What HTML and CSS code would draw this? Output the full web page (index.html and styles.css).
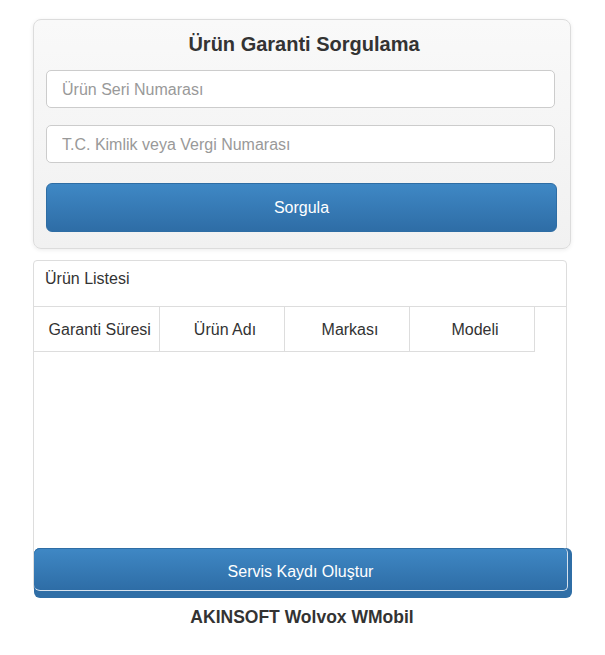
FILE: index.html
```html
<!DOCTYPE html>
<html lang="tr">
<head>
    <meta charset="UTF-8">
    <meta name="viewport" content="width=device-width, initial-scale=1.0">
    <title>Ürün Garanti Sorgulama</title>
    <link rel="stylesheet" href="styles.css">
</head>
<body>
    <div class="page">
        <!-- Sorgulama formu -->
        <div class="well">
            <h2>Ürün Garanti Sorgulama</h2>
            <form id="queryForm">
                <input type="text" class="field" placeholder="Ürün Seri Numarası">
                <input type="text" class="field" placeholder="T.C. Kimlik veya Vergi Numarası">
                <button type="submit" class="btn-blue query-btn">Sorgula</button>
            </form>
        </div>

        <!-- Ürün listesi -->
        <div class="panel">
            <div class="panel-heading">Ürün Listesi</div>
            <table class="product-table">
                <thead>
                    <tr>
                        <th>Garanti Süresi</th>
                        <th>Ürün Adı</th>
                        <th>Markası</th>
                        <th>Modeli</th>
                    </tr>
                </thead>
                <tbody></tbody>
            </table>
        </div>

        <div class="service-wrap">
            <button type="button" class="btn-blue service-btn">Servis Kaydı Oluştur</button>
        </div>

        <p class="footer">AKINSOFT Wolvox WMobil</p>
    </div>
</body>
</html>
```

FILE: styles.css
```css
* {
    margin: 0;
    padding: 0;
    box-sizing: border-box;
}

body {
    font-family: "Liberation Sans", Arial, sans-serif;
    color: #333;
    background-color: #fff;
}

.page {
    width: 538px;
    margin: 19px 0 0 33px;
}

/* Ust kart */
.well {
    width: 538px;
    padding: 12px 13px 16px 12px;
    background: linear-gradient(to bottom, #f9f9f9 0, #f1f1f1 100%);
    border: 1px solid #dcdcdc;
    border-radius: 8px;
    box-shadow: 0 1px 4px rgba(0, 0, 0, 0.08);
}

.well h2 {
    font-size: 20px;
    font-weight: bold;
    text-align: center;
    line-height: 25px;
    padding-left: 5px;
    margin-bottom: 13px;
}

.field {
    display: block;
    width: 509px;
    height: 38px;
    padding: 7px 15px 5px;
    font-family: inherit;
    font-size: 16px;
    color: #555;
    background: #fff;
    border: 1px solid #ccc;
    border-radius: 5px;
    margin-bottom: 17px;
}

.field::placeholder {
    color: #999;
}

.field + .field {
    margin-bottom: 20px;
}

.btn-blue {
    font-family: inherit;
    font-size: 16px;
    color: #fff;
    background: linear-gradient(to bottom, #3f88c5 0, #2e6da6 100%);
    border: 1px solid #2e6da4;
    cursor: pointer;
}

.query-btn {
    display: block;
    width: 511px;
    height: 49px;
    border-radius: 6px;
}

/* Liste paneli */
.panel {
    width: 534px;
    height: 331px;
    margin-top: 11px;
    border: 1px solid #ddd;
    border-radius: 4px;
    background: #fff;
}

.panel-heading {
    height: 46px;
    padding: 9px 11px;
    font-size: 16px;
    line-height: 18px;
    border-bottom: 1px solid #ddd;
}

.product-table {
    border-collapse: collapse;
}

.product-table th {
    width: 125px;
    height: 44px;
    padding: 2px 1px 0 8px;
    font-weight: normal;
    font-size: 16px;
    text-align: center;
    border-right: 1px solid #ddd;
    border-bottom: 1px solid #ddd;
}

/* Alt buton */
.service-wrap {
    width: 538px;
    height: 50px;
    margin: -43px 0 0 1px;
    position: relative;
    background: #2f6ea6;
    border-radius: 6px;
}

.service-btn {
    display: block;
    width: 534px;
    height: 43px;
    padding-top: 6px;
    border: none;
    border-right: 1px solid #d6e2ee;
    border-bottom: 1px solid #d6e2ee;
    border-radius: 6px 5px 5px 6px;
    box-shadow: inset 0 1px 0 #2e6da4;
}

.footer {
    margin-top: 8px;
    font-size: 17.5px;
    font-weight: bold;
    text-align: center;
    line-height: 22px;
}
```
